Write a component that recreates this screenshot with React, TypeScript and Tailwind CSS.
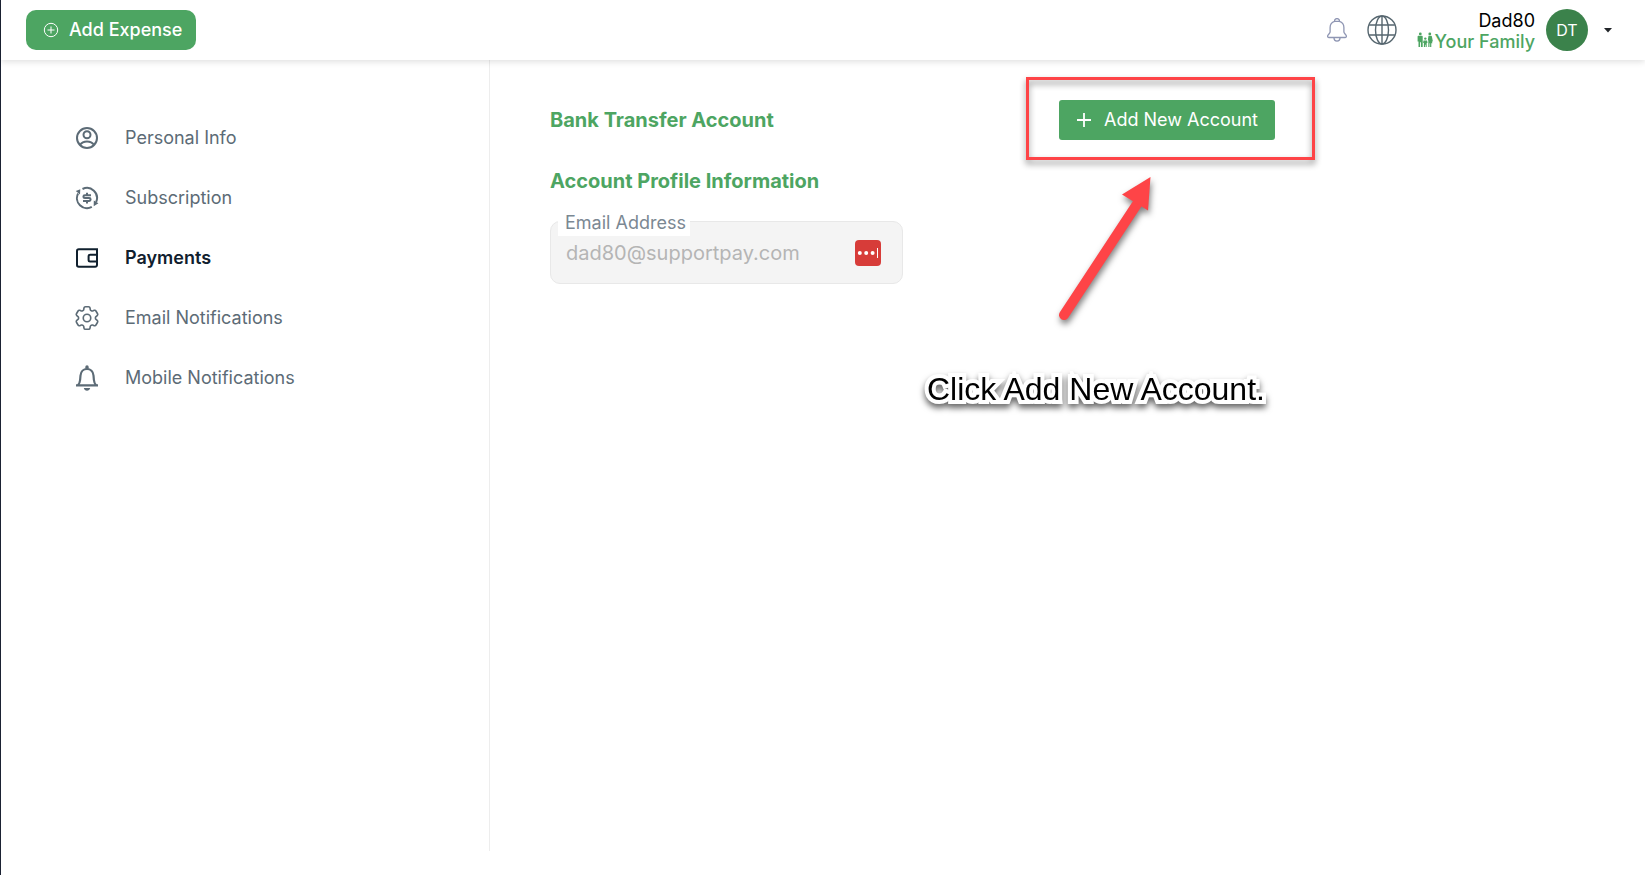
import { useState } from "react";
import type { ReactNode } from "react";
import { HiOutlineCog6Tooth } from "react-icons/hi2";

function PlusCircleIcon() {
  return (
    <svg className="w-4 h-4 shrink-0" viewBox="0 0 16 16" fill="none" stroke="currentColor" aria-hidden="true">
      <circle cx="8" cy="8" r="6.7" />
      <path d="M8 4.5v7M4.5 8h7" />
    </svg>
  );
}

function HeaderBellIcon() {
  return (
    <svg className="w-5 h-6" viewBox="0 0 20 24" fill="none" stroke="currentColor" strokeWidth="1.3" strokeLinejoin="round" aria-hidden="true">
      <path d="M7.600 3.400V2.600a2.400 2 0 0 1 4.800 0v.8c2.800.9 4.500 3.300 4.500 6.100v4.500c0 1.500 2.500 2.500 2.500 4.300 0 .8-.4 1.200-1.200 1.200H1.800c-.8 0-1.200-.4-1.200-1.200 0-1.800 2.500-2.800 2.500-4.300V9.500c0-2.800 1.700-5.200 4.500-6.100z" />
      <path d="M7.600 3.400h4.800M7 19.500v.6a3 3 0 0 0 6 0v-.6" />
    </svg>
  );
}

function GlobeIcon() {
  return (
    <svg className="w-[30px] h-[30px]" viewBox="0 0 30 30" fill="none" stroke="currentColor" strokeWidth="1.4" aria-hidden="true">
      <circle cx="15" cy="15" r="14" />
      <ellipse cx="15" cy="15" rx="6.5" ry="14" />
      <path d="M15 1v28M2.2 10h25.6M2.2 20h25.6" />
    </svg>
  );
}

function FamilyIcon() {
  return (
    <svg className="w-4 h-4 -mt-1" viewBox="0 0 16 16" fill="currentColor" aria-hidden="true">
      <circle cx="3.3" cy="1.900" r="1.400" />
      <path d="M1.700 3.800h3.200c.5 0 .8.300.8.800V15H4v-4.800h-.9V15H1.500V9.600H.6V4.800c0-.6.4-1 1.100-1z" />
      <circle cx="12.800" cy="1.900" r="1.400" />
      <path d="M11.500 3.800h2.600c.4 0 .7.200.8.600l1 5.200h-1l.5 1.700h-1.100V15h-1.200v-3.700h-.6V15h-1.200V8.800l-.4-1.300z" />
      <circle cx="8.300" cy="6.600" r="1.200" />
      <path d="M6.600 8.400h3.400l.6 2.300-.9.200V15H8.600v-2.200H8V15H6.900v-4.100l-.9-.2z" />
    </svg>
  );
}

function ProfileIcon() {
  return (
    <svg className="w-6 h-6" viewBox="0 0 24 24" fill="none" stroke="currentColor" strokeWidth="2" aria-hidden="true">
      <circle cx="12" cy="12" r="10" />
      <circle cx="12" cy="8.800" r="3.500" />
      <path d="M4.900 19c1.600-2.400 4-3.600 7.100-3.600s5.500 1.200 7.100 3.600" />
    </svg>
  );
}

function SubscriptionIcon() {
  return (
    <svg className="w-6 h-6" viewBox="0 0 24 24" fill="none" stroke="currentColor" strokeWidth="2" aria-hidden="true">
      <path d="M7.500 3a10 10 0 0 1 13.600 13M16.800 20.900A10 10 0 0 1 3.100 7.500" />
      <path d="M.8 5.100 5.300 3.300 5 8.600zM23.400 17.200 18.700 20.200l.1-5.600z" fill="currentColor" stroke="none" />
      <path d="M16 9.200H9.900c-2 0-2 2.900 0 2.900h4.200c2 0 2 2.900 0 2.900H8M12 6.800v2.400M12 15v2.400" />
    </svg>
  );
}

function WalletIcon() {
  return (
    <svg className="w-6 h-6" viewBox="0 0 24 24" fill="none" stroke="currentColor" strokeWidth="2" aria-hidden="true">
      <path d="M23 3.200H3.800A1.800 1.800 0 0 0 2 5v14a1.800 1.800 0 0 0 1.800 1.800h16.400A1.800 1.800 0 0 0 22 19V3.200" />
      <path d="M22.500 8.800h-7.400c-.9 0-1.500.6-1.500 1.500v3.600c0 .9.600 1.500 1.500 1.500h7.400" />
    </svg>
  );
}

function BellIcon() {
  return (
    <svg className="w-6 h-[26px]" viewBox="0 0 24 26" fill="none" stroke="currentColor" strokeWidth="2.2" aria-hidden="true">
      <path d="M1 20.300h22M3 20c1.500-1.400 1.900-3 2.100-5l.4-4.500C5.900 6.700 8.400 4 12 4s6.100 2.700 6.500 6.500l.4 4.500c.2 2 .6 3.600 2.100 5" />
      <path d="M10.300 3.800V2a1.700 1.700 0 0 1 3.400 0v1.800zM8.800 23h6.400c-.5 1.800-1.600 2.800-3.200 2.800S9.300 24.800 8.800 23z" fill="currentColor" stroke="none" />
    </svg>
  );
}

const navItems: { label: string; icon: ReactNode }[] = [
  { label: "Personal Info", icon: <ProfileIcon /> },
  { label: "Subscription", icon: <SubscriptionIcon /> },
  { label: "Payments", icon: <WalletIcon /> },
  { label: "Email Notifications", icon: <HiOutlineCog6Tooth className="-m-[3px] w-[30px] h-[30px] stroke-[1.3]" /> },
  { label: "Mobile Notifications", icon: <BellIcon /> },
];

function Header() {
  return (
    <header className="relative z-10 flex h-[60px] items-center justify-between bg-white pl-[25px] pr-[33px] shadow-[0_2px_6px_rgba(0,0,0,0.12)]">
      <button
        type="button"
        className="flex h-10 items-center gap-[10px] rounded-[10px] bg-[#4da562] pl-[17px] pr-[14px] text-lg font-medium text-white cursor-pointer"
      >
        <PlusCircleIcon />
        Add Expense
      </button>
      <div className="flex items-center">
        <button type="button" aria-label="Notifications" className="mr-5 text-[#8f96b3] cursor-pointer">
          <HeaderBellIcon />
        </button>
        <button type="button" aria-label="Language" className="mr-5 text-[#56666f] cursor-pointer">
          <GlobeIcon />
        </button>
        <div className="mr-[11px] pt-[2px] text-right text-lg leading-[21px]">
          <p className="text-black">Dad80</p>
          <p className="flex items-center gap-[2px] font-medium text-[#4da562]">
            <FamilyIcon />
            Your Family
          </p>
        </div>
        <button type="button" aria-label="Account menu" className="flex items-center gap-4 cursor-pointer">
          <span className="flex h-[42px] w-[42px] items-center justify-center rounded-full bg-[#3b824b] text-base text-white">
            DT
          </span>
          <svg className="w-2 h-[5px]" viewBox="0 0 8 5" fill="#212529" aria-hidden="true">
            <path d="M0 0h8L4 4.5z" />
          </svg>
        </button>
      </div>
    </header>
  );
}

function Sidebar({ active, onSelect }: { active: string; onSelect: (label: string) => void }) {
  return (
    <nav className="w-[489px] shrink-0 border-r border-[#ededed] pl-[74px] pt-12">
      {navItems.map((item) => (
        <button
          key={item.label}
          type="button"
          onClick={() => onSelect(item.label)}
          className={
            item.label === active
              ? "flex h-[60px] items-center gap-[26px] text-lg font-semibold text-[#10202e] cursor-pointer"
              : "flex h-[60px] items-center gap-[26px] text-lg text-[#5c6b76] cursor-pointer"
          }
        >
          {item.icon}
          {item.label}
        </button>
      ))}
    </nav>
  );
}

function AddAccount() {
  return (
    <div className="relative">
      <button
        type="button"
        className="flex h-10 w-[216px] items-center justify-center gap-3 rounded-[3px] bg-[#4da562] text-lg text-white cursor-pointer"
      >
        <svg className="w-4 h-4" viewBox="0 0 16 16" fill="none" stroke="currentColor" strokeWidth="1.8" aria-hidden="true">
          <path d="M8 1v14M1 8h14" />
        </svg>
        Add New Account
      </button>
      {/* callout drawn over the page */}
      <div className="pointer-events-none absolute -left-[33px] -top-[23px] h-[83px] w-[289px] border-[3px] border-[#fe4447] drop-shadow-[0_4px_3px_rgba(0,0,0,0.45)]" />
      <svg
        className="pointer-events-none absolute -left-2 top-[72px] h-[160px] w-[110px] drop-shadow-[1px_4px_3px_rgba(0,0,0,0.5)]"
        viewBox="0 0 110 160"
        fill="#fe4447"
        aria-hidden="true"
      >
        <path d="M13 143 90 26" stroke="#fe4447" strokeWidth="10" strokeLinecap="round" />
        <path d="M99.500 5 71 22.500 97 38.500z" />
      </svg>
      <p className="pointer-events-none absolute -left-[132px] top-[271px] whitespace-nowrap font-['Liberation_Sans',Arial,sans-serif] text-[32px] leading-9 text-black [paint-order:stroke_fill] [-webkit-text-stroke:8px_white] drop-shadow-[0_4px_3px_rgba(0,0,0,0.6)]">
        Click Add New Account.
      </p>
    </div>
  );
}

function EmailField() {
  return (
    <div className="relative mt-[26px] w-[353px]">
      <label htmlFor="email" className="absolute -top-3 left-2 bg-white pl-[7px] pr-1 text-lg leading-[27px] text-[#7b8893]">
        Email Address
      </label>
      <input
        id="email"
        type="email"
        readOnly
        defaultValue="dad80@supportpay.com"
        className="h-[63px] w-full rounded-[10px] border border-[#e8e8e8] bg-[#f4f4f4] pl-[15px] pr-12 text-xl text-[#b5b5b5] outline-none"
      />
      <svg className="absolute right-[22px] top-[19px] h-[26px] w-[26px]" viewBox="0 0 26 26" aria-hidden="true">
        <rect width="26" height="26" rx="4" fill="#d73c39" />
        <g fill="#fff">
          <circle cx="4.8" cy="13" r="2" />
          <circle cx="11.2" cy="13" r="2" />
          <circle cx="17.6" cy="13" r="2" />
          <rect x="22" y="8" width="1" height="10" />
        </g>
      </svg>
    </div>
  );
}

export default function App() {
  const [active, setActive] = useState("Payments");

  return (
    <div className="flex min-h-screen flex-col border-l border-[#1b2233] bg-white font-[Inter,sans-serif]">
      <Header />
      <div className="mb-6 flex flex-1">
        <Sidebar active={active} onSelect={setActive} />
        <main className="flex-1 pl-[60px] pt-10">
          <div className="flex items-center">
            <h2 className="w-[509px] text-xl font-bold text-[#4da562]">Bank Transfer Account</h2>
            <AddAccount />
          </div>
          <h2 className="mt-[27px] text-xl font-bold text-[#4da562]">Account Profile Information</h2>
          <EmailField />
        </main>
      </div>
    </div>
  );
}
